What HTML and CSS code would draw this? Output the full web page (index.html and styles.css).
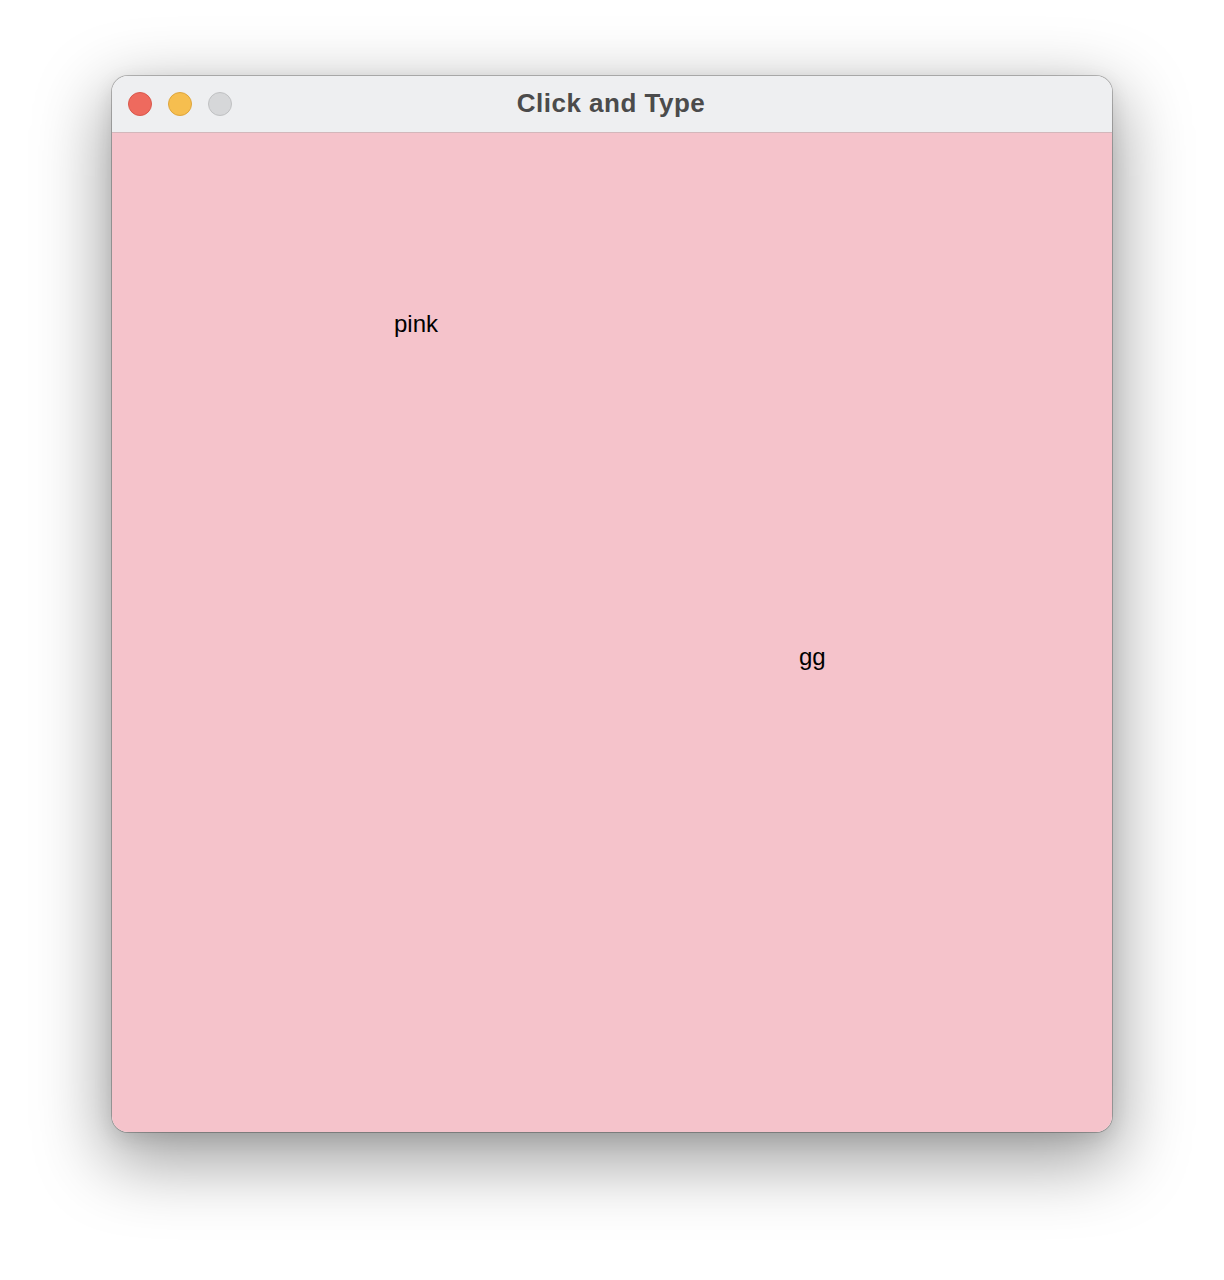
FILE: index.html
```html
<!DOCTYPE html>
<html>
<head>
<meta charset="utf-8">
<link rel="stylesheet" href="styles.css">
</head>
<body>
<div class="window">
  <div class="titlebar">
    <div class="lights">
      <span class="light red"></span>
      <span class="light yellow"></span>
      <span class="light gray"></span>
    </div>
    <div class="title">Click and Type</div>
    <div class="spacer"></div>
  </div>
  <div class="canvas">
    <span class="word word-pink">pink</span>
    <span class="word word-gg">gg</span>
  </div>
</div>
</body>
</html>
```
FILE: styles.css
```css
html, body {
  margin: 0;
  padding: 0;
  background: #ffffff;
}
body {
  width: 1224px;
  height: 1280px;
  padding-top: 76px;
  padding-left: 112px;
  box-sizing: border-box;
  font-family: "Liberation Sans", Arial, sans-serif;
}
.window {
  width: 1000px;
  height: 1056px;
  border-radius: 16px;
  overflow: hidden;
  display: flex;
  flex-direction: column;
  box-shadow: 0 0 0 1px rgba(0,0,0,0.24), 0 24px 70px 6px rgba(0,0,0,0.38), 0 6px 20px rgba(0,0,0,0.10);
}
.titlebar {
  height: 57px;
  flex: none;
  background: #eeeff1;
  border-bottom: 1px solid #d3b7bb;
  display: grid;
  grid-template-columns: 1fr auto 1fr;
  align-items: center;
  padding: 0 16px;
  box-sizing: border-box;
}
.lights {
  display: flex;
  gap: 16px;
  padding-bottom: 1px;
}
.light {
  width: 24px;
  height: 24px;
  border-radius: 50%;
  box-sizing: border-box;
}
.red { background: #ee6a5e; border: 1px solid #d9584c; }
.yellow { background: #f6be4f; border: 1px solid #dea53c; }
.gray { background: #d6d7d9; border: 1px solid #bfc0c2; }
.title {
  font-size: 26px;
  font-weight: bold;
  color: #4b4b4b;
  letter-spacing: 0.5px;
  padding-right: 2px;
  padding-bottom: 2px;
}
.canvas {
  flex: 1;
  position: relative;
  background: #f5c3cb;
}
.word {
  position: absolute;
  font-size: 24px;
  line-height: 24px;
  color: #000000;
}
.word-pink { left: 282px; top: 179px; }
.word-gg { left: 687px; top: 512px; }
```
